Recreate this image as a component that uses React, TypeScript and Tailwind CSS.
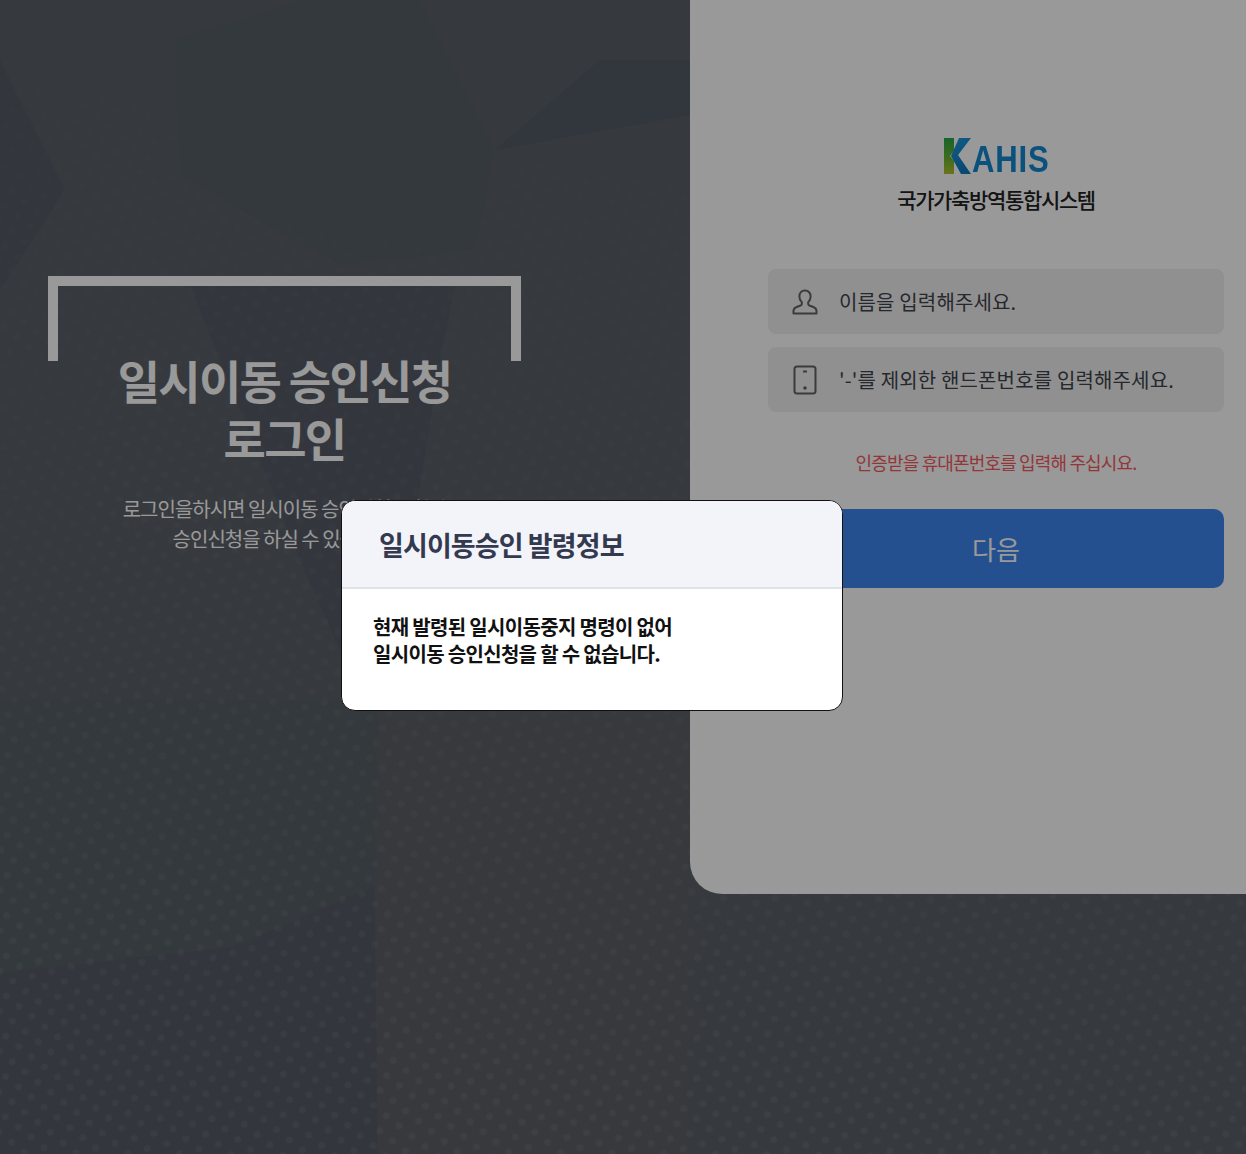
const KR = { fontFamily: '"Noto Sans CJK KR", "Noto Sans", sans-serif' };

// faint facets and halftone dots of the page background
function Backdrop() {
  return (
    <svg className="absolute inset-0 w-full h-full" viewBox="0 0 1246 1154" preserveAspectRatio="none">
      <defs>
        <pattern id="dots" width="20" height="26" patternUnits="userSpaceOnUse" patternTransform="rotate(-14)">
          <circle cx="5" cy="6" r="3.6" fill="#ffffff" />
          <circle cx="15" cy="19" r="3.6" fill="#ffffff" />
        </pattern>
        <linearGradient id="fade" x1="0.7" y1="0.1" x2="0.55" y2="1">
          <stop offset="0" stopColor="#fff" stopOpacity="0" />
          <stop offset="0.5" stopColor="#fff" stopOpacity="0.45" />
          <stop offset="1" stopColor="#fff" stopOpacity="1" />
        </linearGradient>
        <mask id="dotMask">
          <rect width="1246" height="1154" fill="url(#fade)" />
        </mask>
      </defs>
      <polygon points="0,60 65,190 0,290" fill="#565d67" />
      <polygon points="175,40 300,0 420,0 495,150 475,250 340,265 180,175" fill="#585f67" />
      <polygon points="495,150 600,60 690,60 690,115" fill="#545b67" />
      <polygon points="190,285 455,285 440,360 380,740 300,560" fill="#565d67" />
      <polygon points="0,365 90,345 105,700 0,720" fill="#5a6066" />
      <polygon points="0,700 378,700 374,886 233,947 0,973" fill="#586066" />
      <polygon points="0,973 233,947 374,886 378,1154 0,1154" fill="#555c66" />
      <polygon points="378,700 690,700 690,1154 378,1154" fill="#5c6067" />
      <rect width="1246" height="1154" fill="url(#dots)" opacity="0.06" mask="url(#dotMask)" />
    </svg>
  );
}

function UserIcon() {
  return (
    <svg width="26" height="26" viewBox="0 0 26 26" fill="none" stroke="#636363" strokeWidth="2" strokeLinejoin="round">
      <path d="M13 1.500c-3.600 0-5.600 2.600-5.600 6 0 2.600 1 4.600 2.400 5.800v1.600c0 1-.7 1.500-1.800 1.900l-4 1.500C2.500 19 1.500 20.300 1.500 22v2.500h23V22c0-1.700-1-3-2.500-3.700l-4-1.500c-1.100-.4-1.800-.9-1.800-1.900v-1.600c1.400-1.200 2.400-3.200 2.400-5.800 0-3.400-2-6-5.600-6z" />
    </svg>
  );
}

function PhoneIcon() {
  return (
    <svg width="24" height="30" viewBox="0 0 24 30" fill="none">
      <rect x="1.500" y="1.500" width="21" height="27" rx="2.500" stroke="#636363" strokeWidth="2" />
      <path d="M10 6.500h4" stroke="#636363" strokeWidth="2" />
      <circle cx="12" cy="23" r="1.800" fill="#636363" />
    </svg>
  );
}

function Logo() {
  return (
    <div className="flex items-end justify-center h-[36px]">
      <svg width="28" height="36" viewBox="0 0 28 36">
        <defs>
          <linearGradient id="kLeft" x1="0" y1="0" x2="0" y2="1">
            <stop offset="0" stopColor="#27a84a" />
            <stop offset="0.6" stopColor="#6fb52e" />
            <stop offset="1" stopColor="#b5c02a" />
          </linearGradient>
          <linearGradient id="kRight" x1="0" y1="0" x2="0.4" y2="1">
            <stop offset="0" stopColor="#1e9be0" />
            <stop offset="1" stopColor="#0f7ac0" />
          </linearGradient>
        </defs>
        <polygon points="0,0 10,0 10,13 6,18 10,23 10,36 0,36" fill="url(#kLeft)" />
        <polygon points="15,0 27,0 14,17 27,36 17,36 7,18" fill="url(#kRight)" />
      </svg>
      <span
        className="w-[77px] whitespace-nowrap origin-left scale-x-[0.84] text-[37px] leading-[28px] font-bold text-[#1288d0] tracking-[1px]"
        style={{ fontFamily: '"Liberation Sans", sans-serif' }}
      >
        AHIS
      </span>
    </div>
  );
}

function Field({ icon, label }: { icon: React.ReactNode; label: string }) {
  return (
    <div className="h-[65px] rounded-[8px] bg-[#f0f0f0] flex items-center pl-[24px]">
      <div className="w-[26px] flex justify-center">{icon}</div>
      <span className="ml-[21px] text-[20px] text-[#3f434a] tracking-[0.15px]">{label}</span>
    </div>
  );
}

export default function App() {
  return (
    <div className="relative w-full h-[1154px] overflow-hidden bg-[#5b6068] flex" style={KR}>
      <Backdrop />

      <section className="relative w-[690px] pt-[276px] pl-[48px]">
        <div className="w-[473px] flex flex-col items-center">
          <div className="w-full h-[85px] border-t-[10px] border-x-[10px] border-white" />
          <h1 className="text-[46px] leading-[58px] font-bold text-white text-center tracking-[-1.700px] mt-[-11px]">
            일시이동 승인신청
            <br />
            로그인
          </h1>
          <p className="mt-[28px] text-[20px] leading-[30px] text-white text-center tracking-[-1px]">
            로그인을하시면 일시이동 승인신청 조회와
            <br />
            승인신청을 하실 수 있습니다.
          </p>
        </div>
      </section>

      <section className="relative w-[556px] h-[894px] bg-white rounded-bl-[32px] pt-[138px] pr-[22px] pl-[78px]">
        <Logo />
        <p className="mt-[9px] text-center text-[21px] leading-[32px] font-medium text-[#222] tracking-[-1.350px]">
          국가가축방역통합시스템
        </p>
        <div className="mt-[54px] flex flex-col gap-[13px]">
          <Field icon={<UserIcon />} label="이름을 입력해주세요." />
          <Field icon={<PhoneIcon />} label="'-'를 제외한 핸드폰번호를 입력해주세요." />
        </div>
        <p className="mt-[36px] text-center text-[18px] leading-[28px] text-[#f55a62] tracking-[-0.850px]">
          인증받을 휴대폰번호를 입력해 주십시요.
        </p>
        <button className="mt-[33px] w-full h-[79px] rounded-[10px] bg-[#3f85f0] text-white text-[26px]">
          다음
        </button>
      </section>

      <div className="absolute inset-0 bg-black/40" />

      <div className="absolute left-[341px] top-[500px] w-[502px] h-[211px] rounded-[14px] border border-[#111] bg-white overflow-hidden">
        <div className="h-[88px] bg-[#f3f4fa] border-b-2 border-[#e2e3ea] flex items-center pl-[37px] pt-[2px]">
          <h2 className="text-[27px] font-bold text-[#333a50] tracking-[-0.900px]">일시이동승인 발령정보</h2>
        </div>
        <p className="pt-[24px] pl-[31px] text-[20px] leading-[27px] font-bold text-[#111] tracking-[-0.680px]">
          현재 발령된 일시이동중지 명령이 없어
          <br />
          일시이동 승인신청을 할 수 없습니다.
        </p>
      </div>
    </div>
  );
}
